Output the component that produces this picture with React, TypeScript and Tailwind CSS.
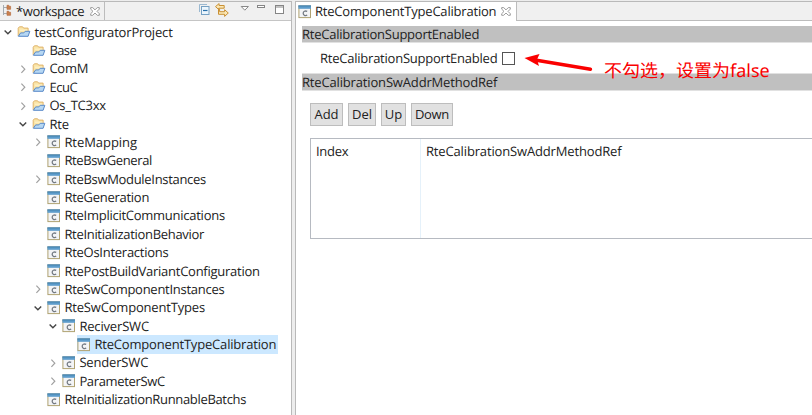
import React from "react";

type Row = { level: number; kind: "folder" | "component"; label: string; tracking: string; state?: "open" | "closed"; selected?: boolean };

const rows: Row[] = [
  { level: 0, kind: "folder", label: "testConfiguratorProject", tracking: "tracking-[-0.17px]", state: "open" },
  { level: 1, kind: "folder", label: "Base", tracking: "tracking-[-0.6px]" },
  { level: 1, kind: "folder", label: "ComM", tracking: "tracking-[-0.25px]", state: "closed" },
  { level: 1, kind: "folder", label: "EcuC", tracking: "tracking-[-0.45px]", state: "closed" },
  { level: 1, kind: "folder", label: "Os_TC3xx", tracking: "tracking-[-0.25px]", state: "closed" },
  { level: 1, kind: "folder", label: "Rte", tracking: "tracking-[-0.1px]", state: "open" },
  { level: 2, kind: "component", label: "RteMapping", tracking: "tracking-[-0.05px]", state: "closed" },
  { level: 2, kind: "component", label: "RteBswGeneral", tracking: "tracking-[-0.38px]" },
  { level: 2, kind: "component", label: "RteBswModuleInstances", tracking: "tracking-[-0.31px]", state: "closed" },
  { level: 2, kind: "component", label: "RteGeneration", tracking: "tracking-[-0.27px]" },
  { level: 2, kind: "component", label: "RteImplicitCommunications", tracking: "tracking-[-0.26px]" },
  { level: 2, kind: "component", label: "RteInitializationBehavior", tracking: "tracking-[-0.31px]" },
  { level: 2, kind: "component", label: "RteOsInteractions", tracking: "tracking-[-0.26px]" },
  { level: 2, kind: "component", label: "RtePostBuildVariantConfiguration", tracking: "tracking-[-0.26px]" },
  { level: 2, kind: "component", label: "RteSwComponentInstances", tracking: "tracking-[-0.27px]", state: "closed" },
  { level: 2, kind: "component", label: "RteSwComponentTypes", tracking: "tracking-[-0.18px]", state: "open" },
  { level: 3, kind: "component", label: "ReciverSWC", tracking: "tracking-[-0.17px]", state: "open" },
  { level: 4, kind: "component", label: "RteComponentTypeCalibration", tracking: "tracking-[-0.18px]", selected: true },
  { level: 3, kind: "component", label: "SenderSWC", tracking: "tracking-[-0.17px]", state: "closed" },
  { level: 3, kind: "component", label: "ParameterSwC", tracking: "tracking-[-0.35px]", state: "closed" },
  { level: 2, kind: "component", label: "RteInitializationRunnableBatchs", tracking: "tracking-[-0.33px]" },
];

const indents = ["pl-[2px]", "pl-[17px]", "pl-[32px]", "pl-[47px]", "pl-[62px]"];

function ComponentIcon() {
  return (
    <svg width="14" height="14" viewBox="0 0 14 14" className="shrink-0">
      <rect x=".9" y="1" width="11.6" height="11.6" fill="#f3f4f6" stroke="#b0a272" />
      <rect x=".4" y=".5" width="12.6" height="3.3" fill="#5d9ccb" />
      <path d="M.4 1h12.6" stroke="#4481ad" />
      <path d="M9.2 6.4c-2.1-1-4 0-4 1.9s1.9 2.9 4 1.9" fill="none" stroke="#747a83" strokeWidth="1.3" />
    </svg>
  );
}

function FolderIcon() {
  return (
    <svg width="14" height="14" viewBox="0 0 14 14" className="shrink-0">
      <path d="M1.2 11V3.2l1.2-1.4h3.2l1 1.3h4.5V6" fill="#fae5a8" stroke="#dfb36a" />
      <path d="M3 5.2h7.5" stroke="#fff3cb" />
      <path d="M1.4 11.3 3.6 7.9h3.2l1.4-1.6h4.6l-1.7 5z" fill="#b6d7f3" stroke="#5889c8" strokeLinejoin="round" />
    </svg>
  );
}

function Twisty({ state }: { state?: "open" | "closed" }) {
  return (
    <svg width="12" height="12" viewBox="0 0 12 12" className="mr-[3px] shrink-0" fill="none">
      {state === "open" && <path d="m2.6 4.5 3.3 3.2 3.3-3.2" stroke="#454545" strokeWidth="1.4" />}
      {state === "closed" && <path d="m4.4 2.6 3.4 3.6-3.4 3.6" stroke="#a0a0a0" strokeWidth="1.2" />}
    </svg>
  );
}

function CloseIcon() {
  return (
    <svg width="10" height="9" viewBox="0 0 10 9" className="shrink-0">
      <path d="M.7.6h2L5 2.9 7.3.6h2v1.5L7 4.4l2.3 2.3v1.6h-2L5 6 2.7 8.3h-2V6.7L3 4.4.7 2.1z" fill="#fff" stroke="#929292" strokeWidth=".9" />
    </svg>
  );
}

function WorkspaceIcon() {
  return (
    <svg width="11" height="14" viewBox="0 0 11 14" className="shrink-0">
      <path d="M1.5 1v10M1.5 3.5H5M1.5 9.5H5" stroke="#a5abb0" fill="none" />
      <path d="M5 1.3h1.8v1h1.8v3H5zM5 7.3h1.8v1h1.8v3H5z" fill="#c9814e" stroke="#b96f42" strokeWidth=".7" />
    </svg>
  );
}

function ViewTools() {
  return (
    <svg width="88" height="16" viewBox="0 0 88 16" fill="none" className="shrink-0">
      <path d="M1.5 10V2.5H9" stroke="#9bb9d1" />
      <rect x="3.5" y="4.5" width="7.5" height="8" fill="#ecf6fd" stroke="#75a0c3" />
      <path d="M5 8.5h4.5" stroke="#286fa9" strokeWidth="1.2" />
      <path d="m17.5 4.6 3.6-3v1.9h5.1v2.7h-5.1v1.7zM30.3 11l-3.7-3.3v2h-5V7.3l-1.1-.9v5.9h6.1v2.1z" fill="#fbe8b6" stroke="#c99034" strokeLinejoin="round" />
      <path d="M43.2 4.5h7.2l-3.6 3.7z" fill="#fff" stroke="#888" />
      <rect x="59.5" y="3.5" width="7" height="2" fill="#fff" stroke="#858585" />
      <rect x="77.5" y="3.5" width="8" height="8" fill="#fff" stroke="#858585" />
      <path d="M77.5 5h8" stroke="#858585" />
    </svg>
  );
}

function TreeRow({ row }: { row: Row }) {
  return (
    <div className={`flex h-[18.38px] items-center ${indents[row.level]}`}>
      <Twisty state={row.state} />
      <div className={`flex h-full items-center gap-[3px] ${row.selected ? "bg-[#cce8ff] pr-[2px]" : ""}`}>
        {row.kind === "folder" ? <FolderIcon /> : <ComponentIcon />}
        <span className={`whitespace-nowrap pl-[0.4px] leading-none ${row.tracking}`}>{row.label}</span>
      </div>
    </div>
  );
}

function SectionTitle({ children }: { children: React.ReactNode }) {
  return <h2 className="flex h-4 items-center bg-[#c0c0c0] whitespace-nowrap leading-none">{children}</h2>;
}

export default function App() {
  return (
    <div className="relative flex h-[415px] w-[812px] overflow-hidden bg-[#ededed] pt-px font-['Open_Sans','Noto_Sans_CJK_SC',sans-serif] text-[13px] text-[#222] [text-rendering:geometricPrecision]">
      <aside className="w-[292px] shrink-0 border-t border-r border-[#b9b9b9] bg-white">
        <header className="flex h-[19px] border-b border-[#c5c5c5] bg-[#f0f0f0]">
          <div className="flex w-[105px] shrink-0 items-center border-r border-[#bcbcbc] pl-[2px]">
            <WorkspaceIcon />
            <span className="ml-[3px] w-[68px] whitespace-nowrap leading-none tracking-[-0.4px]">*workspace</span>
            <span className="ml-[6px]"><CloseIcon /></span>
          </div>
          <div className="ml-auto pr-[5px]"><ViewTools /></div>
        </header>
        <nav className="pt-[2px]">
          {rows.map((row) => <TreeRow key={row.label} row={row} />)}
        </nav>
      </aside>
      <main className="ml-[3px] min-w-0 flex-1 border-t border-l border-[#b9b9b9] bg-white">
        <header className="flex h-[19px]">
          <div className="flex w-[221px] shrink-0 items-center border-r border-[#bcbcbc] pl-[2px]">
            <ComponentIcon />
            <span className="ml-[3px] w-[182px] whitespace-nowrap leading-none tracking-[-0.2px]">RteComponentTypeCalibration</span>
            <span className="ml-[4px]"><CloseIcon /></span>
          </div>
          <div className="flex-1 border-b border-[#bcbcbc] bg-[#f0f0f0]" />
        </header>
        <section className="pt-[5px] pl-[6px]">
          <SectionTitle><span className="tracking-[-0.24px]">RteCalibrationSupportEnabled</span></SectionTitle>
          <div className="flex h-8 items-center border-y border-[#e1e1e1] pl-[18px]">
            <span className="w-[182px] whitespace-nowrap leading-none tracking-[-0.23px]">RteCalibrationSupportEnabled</span>
            <span className="h-[13px] w-[13px] border border-[#555] bg-white" />
          </div>
          <SectionTitle><span className="tracking-[-0.16px]">RteCalibrationSwAddrMethodRef</span></SectionTitle>
          <div className="flex gap-[5px] border-t border-[#e1e1e1] pt-3 pl-2">
            <button className="h-[23px] w-[33px] border border-[#bdbdbd] bg-[#e1e1e1] leading-none">Add</button>
            <button className="h-[23px] w-[28px] border border-[#bdbdbd] bg-[#e1e1e1] leading-none">Del</button>
            <button className="h-[23px] w-[25px] border border-[#bdbdbd] bg-[#e1e1e1] leading-none">Up</button>
            <button className="h-[23px] w-[42px] border border-[#bdbdbd] bg-[#e1e1e1] leading-none tracking-[-0.3px]">Down</button>
          </div>
          <div className="mt-3 ml-2 flex h-[101px] border-y border-l border-[#b6bac1]">
            <div className="w-[110px] border-r border-[#e5f1fa] pt-[5px] pl-[5px] leading-[14px] tracking-[-0.3px]">Index</div>
            <div className="flex-1 pt-[5px] pl-[5px] leading-[14px] tracking-[-0.15px]">RteCalibrationSwAddrMethodRef</div>
          </div>
        </section>
      </main>
      <svg className="absolute top-[50px] left-[523px]" width="72" height="23" viewBox="0 0 72 23">
        <path d="M67.5 19.2 12 10" stroke="#fa0000" strokeWidth="3.4" strokeLinecap="round" />
        <path d="m1.5 8 15-4-2.5 5.6 2 6.5z" fill="#fa0000" />
      </svg>
      <p className="absolute top-[60px] left-[604px] whitespace-nowrap font-['Noto_Sans','Noto_Sans_CJK_SC',sans-serif] text-[18px] leading-[22px] text-[#fa0000]">不勾选，设置为false</p>
    </div>
  );
}
